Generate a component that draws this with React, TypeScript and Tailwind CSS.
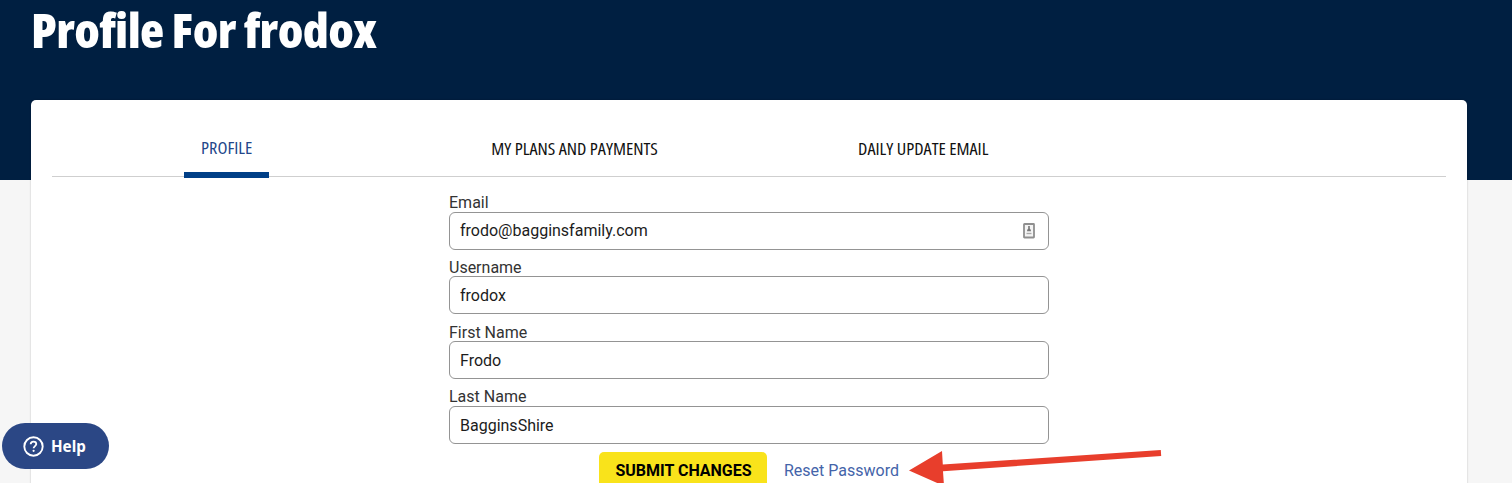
import clsx from "clsx";

interface Tab {
    label: string;
    active?: boolean;
    textClass: string;
}

interface FieldProps {
    label: string;
    value: string;
    autofill?: boolean;
}

const tabs: Tab[] = [
    { label: "PROFILE", active: true, textClass: "w-[85px] pt-[37px] text-[#23478a]" },
    { label: "MY PLANS AND PAYMENTS", textClass: "w-[198px] pt-[38px] text-[#111]" },
    { label: "DAILY UPDATE EMAIL", textClass: "w-[163px] pt-[38px] text-[#111]" },
];

const fields: FieldProps[] = [
    { label: "Email", value: "frodo@bagginsfamily.com", autofill: true },
    { label: "Username", value: "frodox" },
    { label: "First Name", value: "Frodo" },
    { label: "Last Name", value: "BagginsShire" },
];

function AutofillIcon() {
    return (
        <svg width="14" height="18" viewBox="0 0 14 18" className="shrink-0">
            <rect x="2" y="2" width="10" height="13.5" rx="0.5" fill="#f4f4f4" stroke="#8f8f8f" strokeWidth="1.8" />
            <path d="M7 4v3" stroke="#777" strokeWidth="1.6" />
            <path d="M5 9.2c0-1.8 1-2.4 2-2.4s2 .6 2 2.4z" fill="#777" />
            <path d="M4.5 11.5h5" stroke="#aaa" strokeWidth="1.3" />
        </svg>
    );
}

function Field({ label, value, autofill }: FieldProps) {
    return (
        <div className="flex h-[64.8px] flex-col">
            <label className="h-[18.7px] text-[16px] leading-[19px] text-[#333]">{label}</label>
            <div className="flex h-[38px] items-center justify-between rounded-[6px] border border-[#949494] bg-white pr-3 pl-[10px]">
                <span className="pt-px text-[16px] leading-5 text-[#1c1c1c]">{value}</span>
                {autofill && <AutofillIcon />}
            </div>
        </div>
    );
}

function HelpButton() {
    return (
        <button className="absolute top-[423px] left-[2px] flex h-[46px] w-[107px] items-center rounded-full bg-[#2b4785] pl-[21px] text-white">
            <svg width="21" height="21" viewBox="0 0 21 21" fill="none" stroke="currentColor">
                <circle cx="10.5" cy="10.5" r="9.2" strokeWidth="1.9" />
                <path d="M7.7 8.3c0-1.7 1.2-2.7 2.8-2.7s2.8 1 2.8 2.5c0 1.9-2.7 2.1-2.7 4.2" strokeWidth="1.8" />
                <circle cx="10.6" cy="14.8" r="1.1" fill="currentColor" stroke="none" />
            </svg>
            <span className="ml-[7px] font-['Noto_Sans',sans-serif] text-[15.2px] leading-5 font-bold">Help</span>
        </button>
    );
}

export default function App() {
    return (
        <div className="relative h-[483px] overflow-hidden bg-[#f6f6f6] font-[Roboto,sans-serif]">
            <header className="h-[180px] bg-[#001f41] pl-[31px]">
                <h1 className="w-max origin-left scale-x-[1.06] font-['Open_Sans','Noto_Sans',sans-serif] text-[47px] leading-[60px] font-extrabold tracking-[-0.6px] text-white [font-stretch:75%]">
                    Profile For frodox
                </h1>
            </header>

            <main className="relative mt-[-80px] mr-[45px] ml-[31px] h-[420px] rounded-t-[5px] bg-white px-[21px] shadow-[0_0_2px_rgba(0,0,0,0.25)]">
                <nav className="grid h-[77px] grid-cols-4 border-b border-[#cfcfcf]">
                    {tabs.map((tab) => (
                        <div key={tab.label} className="flex justify-center">
                            <a
                                className={clsx(
                                    "flex h-[78px] justify-center font-['Open_Sans','Noto_Sans',sans-serif] text-[15.5px] leading-[22px] whitespace-nowrap [font-stretch:75%]",
                                    tab.textClass,
                                    tab.active && "border-b-6 border-[#003f87]",
                                )}
                            >
                                <span className="scale-x-[1.18]">{tab.label}</span>
                            </a>
                        </div>
                    ))}
                </nav>

                <form className="mx-auto w-[600px] pt-[16px]">
                    {fields.map((field) => (
                        <Field key={field.label} {...field} />
                    ))}
                    <div className="flex items-center pl-[150px]">
                        <button type="button" className="h-[38px] w-[168px] rounded-[5px] bg-[#f9e31b] pl-px text-[16px] font-bold text-black">
                            SUBMIT CHANGES
                        </button>
                        <a className="ml-[17px] text-[16px] text-[#4464a9]">Reset Password</a>
                    </div>
                </form>
            </main>

            {/* Pointer towards the reset link */}
            <svg className="absolute top-[440px] left-[900px]" width="270" height="43" viewBox="0 0 270 43">
                <path d="M9 30.5 42 11l.8 13.6L260.8 10l.4 6L43 31.2 44 46z" fill="#e83e2c" />
            </svg>

            <HelpButton />
        </div>
    );
}
